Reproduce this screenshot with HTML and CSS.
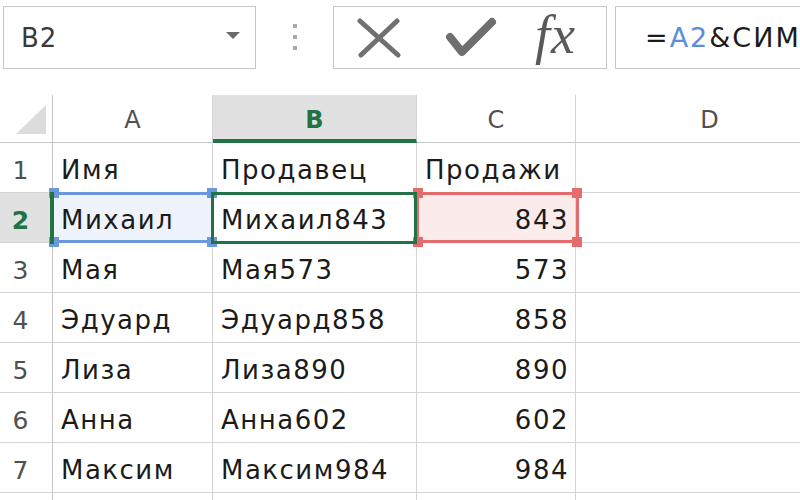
FILE: index.html
```html
<!DOCTYPE html>
<html lang="ru">
<head>
<meta charset="utf-8">
<title>Excel</title>
<link rel="stylesheet" href="styles.css">
</head>
<body>
<div class="app">
  <div class="fbar">
    <div class="namebox">
      <span class="name">B2</span>
      <svg class="caret" width="14" height="8" viewBox="0 0 14 8"><path d="M0 0H14L7 7Z" fill="#6b6b6b"/></svg>
    </div>
    <div class="grip"><i></i><i></i><i></i></div>
    <div class="btns">
      <svg class="ic-x" width="44" height="40" viewBox="0 0 44 40"><path d="M3 3L41 37M40 3L4 37" stroke="#707070" stroke-width="5" stroke-linecap="round" fill="none"/></svg>
      <svg class="ic-ok" width="52" height="44" viewBox="0 0 52 44"><path d="M5 21L17 36L47 6" stroke="#6e6e6e" stroke-width="8" stroke-linecap="round" stroke-linejoin="round" fill="none"/></svg>
      <span class="fx">fx</span>
    </div>
    <div class="formula"><span>=</span><span class="ref-blue">A2</span><span>&amp;СИМ</span></div>
  </div>

  <div class="sheet">
    <div class="grid">
      <div class="corner"><svg width="30" height="29" viewBox="0 0 30 29"><path d="M0 29L30 0V29Z" fill="#dcdcdc"/></svg></div>
      <div class="ch">A</div>
      <div class="ch sel">B</div>
      <div class="ch">C</div>
      <div class="ch">D</div>

      <div class="rh">1</div>
      <div class="c">Имя</div>
      <div class="c">Продавец</div>
      <div class="c">Продажи</div>
      <div class="c"></div>

      <div class="rh sel">2</div>
      <div class="c fill-blue">Михаил</div>
      <div class="c">Михаил843</div>
      <div class="c num fill-red">843</div>
      <div class="c"></div>

      <div class="rh">3</div>
      <div class="c">Мая</div>
      <div class="c">Мая573</div>
      <div class="c num">573</div>
      <div class="c"></div>

      <div class="rh">4</div>
      <div class="c">Эдуард</div>
      <div class="c">Эдуард858</div>
      <div class="c num">858</div>
      <div class="c"></div>

      <div class="rh">5</div>
      <div class="c">Лиза</div>
      <div class="c">Лиза890</div>
      <div class="c num">890</div>
      <div class="c"></div>

      <div class="rh">6</div>
      <div class="c">Анна</div>
      <div class="c">Анна602</div>
      <div class="c num">602</div>
      <div class="c"></div>

      <div class="rh">7</div>
      <div class="c">Максим</div>
      <div class="c">Максим984</div>
      <div class="c num">984</div>
      <div class="c"></div>

      <div class="rh"></div>
      <div class="c"></div>
      <div class="c"></div>
      <div class="c num"></div>
      <div class="c"></div>
    </div>

    <div class="ref ref-a">
      <i class="h tl"></i><i class="h tr"></i><i class="h bl"></i><i class="h br"></i>
    </div>
    <div class="ref ref-c">
      <i class="h tl"></i><i class="h tr"></i><i class="h bl"></i><i class="h br"></i>
    </div>
    <div class="active"></div>
    <div class="rowmark"></div>
  </div>
</div>
</body>
</html>
```

FILE: styles.css
```css
html, body {
  margin: 0;
  padding: 0;
  background: #ffffff;
  overflow: hidden;
}

.app {
  width: 800px;
  height: 500px;
  overflow: hidden;
  font-family: "DejaVu Sans", "Noto Sans", sans-serif;
  color: #1b1b1b;
}

/* ---------- formula bar ---------- */
.fbar {
  display: flex;
  align-items: stretch;
  height: 63px;
  margin-top: 6px;
  padding-left: 3px;
}

.namebox {
  box-sizing: border-box;
  width: 253px;
  flex: none;
  border: 1px solid #c6c6c6;
  display: flex;
  align-items: center;
  padding-left: 17px;
  padding-right: 15px;
}

.name {
  flex: 1;
  font-size: 26px;
  letter-spacing: 1px;
  color: #3a3a3a;
  padding-top: 1px;
}

.caret {
  margin-top: -4px;
}

.grip {
  width: 77px;
  flex: none;
  display: flex;
  flex-direction: column;
  align-items: center;
  justify-content: center;
  gap: 7px;
  padding-bottom: 2px;
}

.grip i {
  display: block;
  width: 4px;
  height: 4px;
  background: #a8a8a8;
}

.btns {
  box-sizing: border-box;
  width: 274px;
  flex: none;
  border: 1px solid #c6c6c6;
  display: flex;
  align-items: center;
  padding-left: 23px;
}

.ic-x {
  margin-top: 1px;
}

.ic-ok {
  margin-left: 44px;
  margin-top: 1px;
}

.fx {
  margin-left: 38px;
  font-family: "Liberation Serif", "DejaVu Serif", serif;
  font-style: italic;
  font-size: 54px;
  color: #5a5a5a;
  line-height: 1;
  margin-top: -6px;
  letter-spacing: 1px;
}

.formula {
  box-sizing: border-box;
  width: 300px;
  flex: none;
  margin-left: 8px;
  border: 1px solid #c6c6c6;
  border-right: none;
  display: flex;
  align-items: center;
  padding-left: 29px;
  font-size: 27px;
  letter-spacing: 2px;
  color: #1b1b1b;
  white-space: nowrap;
}

.ref-blue {
  color: #5b8fdc;
}

/* ---------- sheet ---------- */
.sheet {
  position: relative;
  margin-top: 26px;
  width: 800px;
  overflow: hidden;
}

.grid {
  display: grid;
  grid-template-columns: 53px 160px 204px 159px 268px;
  grid-template-rows: 48px repeat(8, 50px);
  font-size: 26px;
  letter-spacing: 1.5px;
}

.corner {
  box-sizing: border-box;
  border-right: 1px solid #c6c6c6;
  border-bottom: 1px solid #c6c6c6;
  display: flex;
  align-items: flex-start;
  padding: 10px 0 0 16px;
}

.ch {
  box-sizing: border-box;
  border-right: 1px solid #d4d4d4;
  border-bottom: 1px solid #c6c6c6;
  display: flex;
  align-items: center;
  justify-content: center;
  color: #505050;
  font-size: 24px;
  letter-spacing: 0;
  padding-top: 2px;
}

.ch.sel {
  background: #e1e1e1;
  color: #217346;
  font-weight: 700;
  border-bottom: 4px solid #217346;
  padding-top: 6px;
}

.rh {
  box-sizing: border-box;
  border-right: 1px solid #c6c6c6;
  border-bottom: 1px solid #d4d4d4;
  display: flex;
  align-items: flex-end;
  justify-content: center;
  padding-right: 11px;
  padding-bottom: 7px;
  color: #505050;
  font-size: 25px;
  letter-spacing: 0;
}

.rh.sel {
  background: #e1e1e1;
  color: #217346;
  font-weight: 700;
}

.c {
  box-sizing: border-box;
  border-right: 1px solid #d4d4d4;
  border-bottom: 1px solid #d4d4d4;
  display: flex;
  align-items: flex-end;
  padding-left: 8px;
  padding-right: 6px;
  padding-bottom: 7px;
  white-space: nowrap;
  overflow: hidden;
}

.c.num {
  justify-content: flex-end;
}

.fill-blue {
  background: #eef3fb;
}

.fill-red {
  background: #fcebeb;
}

/* ---------- selection overlays ---------- */
.ref {
  position: absolute;
  box-sizing: border-box;
}

.ref-a {
  left: 53px;
  top: 97px;
  width: 160px;
  height: 51px;
  border-top: 3px solid #6b98dc;
  border-bottom: 3px solid #6b98dc;
}

.ref-c {
  left: 416px;
  top: 97px;
  width: 163px;
  height: 51px;
  border: 3px solid #e46c6c;
}

.h {
  position: absolute;
  width: 10px;
  height: 10px;
}

.ref-a .h { background: #6b98dc; }
.ref-c .h { background: #e46c6c; }

.ref .tl { left: -4px; top: -7px; }
.ref .tr { right: -4px; top: -7px; }
.ref .bl { left: -4px; bottom: -7px; }
.ref .br { right: -4px; bottom: -7px; }

.ref-c .tl, .ref-c .bl { left: -6px; }
.ref-c .tr, .ref-c .br { right: -6px; }

.active {
  position: absolute;
  left: 211px;
  top: 97px;
  width: 206px;
  height: 52px;
  box-sizing: border-box;
  border: 3px solid #217346;
}

.rowmark {
  position: absolute;
  left: 50px;
  top: 97px;
  width: 4px;
  height: 52px;
  background: #217346;
}
```
